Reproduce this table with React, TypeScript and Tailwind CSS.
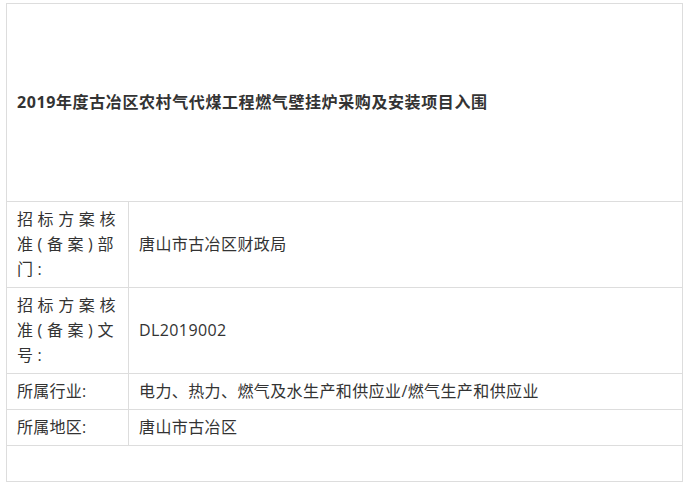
const font = {
  fontFamily: '"Open Sans", "Noto Sans CJK SC", sans-serif',
};

const rows = [
  { label: "招标方案核准(备案)部门:", value: "唐山市古冶区财政局", spaced: true },
  { label: "招标方案核准(备案)文号:", value: "DL2019002", spaced: true },
  { label: "所属行业:", value: "电力、热力、燃气及水生产和供应业/燃气生产和供应业" },
  { label: "所属地区:", value: "唐山市古冶区" },
];

export default function App() {
  return (
    <div className="min-h-[494px] bg-white pl-[6px] pt-[3px]" style={font}>
      <table className="w-[677px] border-collapse text-[16px] leading-[25px] text-[#333]">
        <tbody>
          <tr>
            <td
              colSpan={2}
              className="h-[198px] border border-[#ddd] px-[10px] align-middle font-bold tracking-[0.6px]"
            >
              2019年度古冶区农村气代煤工程燃气壁挂炉采购及安装项目入围
            </td>
          </tr>
          {rows.map((r) => (
            <tr key={r.label}>
              <td
                className={`w-[122px] border border-[#ddd] pl-[10px] pr-[6px] py-[5px] align-middle ${
                  r.spaced ? "tracking-[4.6px]" : "tracking-[0.25px]"
                }`}
              >
                {r.label}
              </td>
              <td className="border border-[#ddd] px-[10px] py-[5px] align-middle tracking-[0.4px]">
                {r.value}
              </td>
            </tr>
          ))}
          <tr>
            <td colSpan={2} className="h-[36px] border border-[#ddd]"></td>
          </tr>
        </tbody>
      </table>
    </div>
  );
}
